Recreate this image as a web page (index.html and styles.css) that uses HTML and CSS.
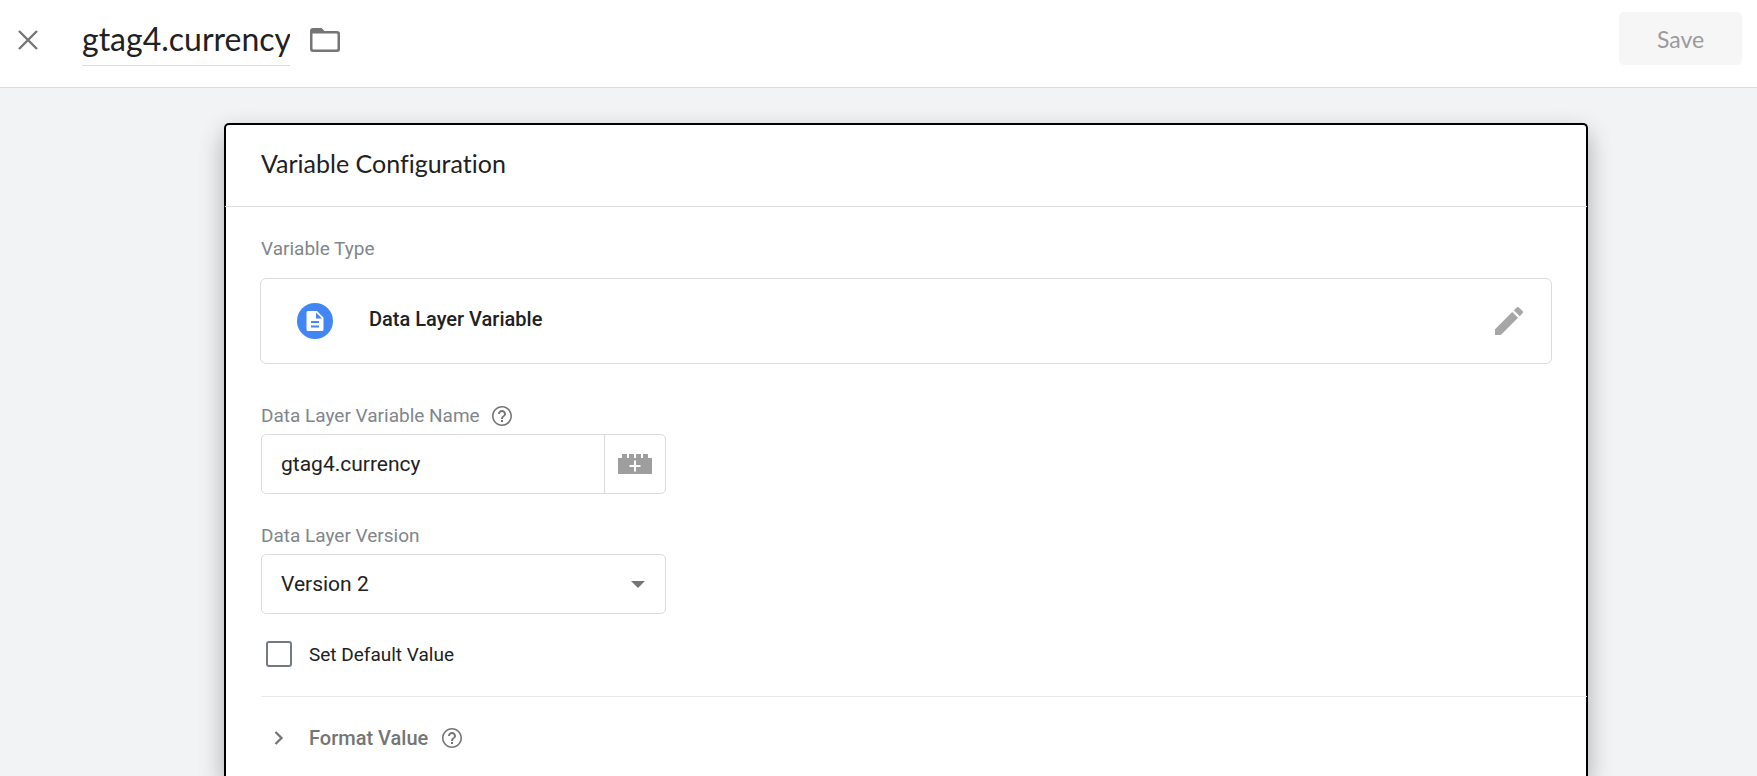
FILE: index.html
```html
<!DOCTYPE html>
<html lang="en">
<head>
    <meta charset="UTF-8">
    <meta name="viewport" content="width=device-width, initial-scale=1.0">
    <title>gtag4.currency | Variable</title>
    <link rel="stylesheet" href="styles.css">
</head>
<body>
    <header class="topbar">
        <button class="icon-button" type="button" aria-label="Close">
            <svg width="20" height="20" viewBox="0 0 20 20"><path d="M1 1L19 19M19 1L1 19" fill="none" stroke="#757575" stroke-width="2.4"/></svg>
        </button>
        <input class="title-input" type="text" value="gtag4.currency" aria-label="Variable name">
        <button class="icon-button" type="button" aria-label="Move to folder">
            <svg width="30" height="24" viewBox="0 0 30 24"><path d="M3 0H11.500L14.500 3H27Q30 3 30 6V21Q30 24 27 24H3Q0 24 0 21V3Q0 0 3 0ZM2.500 5.500V20.500Q2.500 21.500 3.500 21.500H26.500Q27.500 21.500 27.500 20.500V6.500Q27.500 5.500 26.500 5.500Z" fill="#757575" fill-rule="evenodd"/></svg>
        </button>
        <button class="save-button" type="button" disabled>Save</button>
    </header>

    <main class="card">
        <h2 class="card-title">Variable Configuration</h2>
        <div class="card-body">
            <div class="label">Variable Type</div>
            <div class="type-box">
                <svg width="36" height="36" viewBox="0 0 36 36">
                    <circle cx="18" cy="18" r="18" fill="#4285f4"/>
                    <path d="M11 8H20L26.500 14.500V26.500Q26.500 28 25 28H11Q9.500 28 9.500 26.500V9.500Q9.500 8 11 8ZM19 9.500V15.500H25Z" fill="#fff" fill-rule="evenodd"/>
                    <path d="M14 19H22M14 23.500H22" stroke="#4285f4" stroke-width="2"/>
                </svg>
                <span class="type-name">Data Layer Variable</span>
                <button class="icon-button" type="button" aria-label="Edit type">
                    <svg width="28" height="28" viewBox="3 3 18 18"><path d="M3 17.250V21h3.750L17.810 9.940l-3.750-3.750L3 17.250zM20.710 7.040c.39-.39.39-1.020 0-1.410l-2.340-2.340c-.39-.39-1.020-.39-1.410 0l-1.830 1.830 3.750 3.750 1.830-1.830z" fill="#a6a6a6"/></svg>
                </button>
            </div>

            <div class="label-row">
                <label class="label" for="variable-name">Data Layer Variable Name</label>
                <svg class="help" width="20" height="20" viewBox="2 2 20 20"><path d="M11 18h2v-2h-2v2zm1-16C6.480 2 2 6.480 2 12s4.480 10 10 10 10-4.480 10-10S17.520 2 12 2zm0 18.400c-4.600 0-8.400-3.800-8.400-8.400s3.800-8.400 8.400-8.400 8.400 3.800 8.400 8.400-3.800 8.400-8.400 8.400zm0-14.400c-2.210 0-4 1.790-4 4h2c0-1.100.9-2 2-2s2 .9 2 2c0 2-3 1.750-3 5h2c0-2.250 3-2.500 3-5 0-2.210-1.790-4-4-4z"/></svg>
            </div>
            <div class="field name-field">
                <input id="variable-name" type="text" value="gtag4.currency">
                <button type="button" aria-label="Insert variable">
                    <svg width="34" height="20" viewBox="0 0 34 20">
                        <path d="M0 4H4V0H9V4H11V0H16V4H18V0H23V4H25V0H30V4H34V20H0Z" fill="#9e9e9e"/>
                        <path d="M17 6.500V17.500M11.500 12H22.500" stroke="#fff" stroke-width="2"/>
                    </svg>
                </button>
            </div>

            <div class="label-row">
                <label class="label" for="version">Data Layer Version</label>
            </div>
            <div class="field version-field">
                <select id="version">
                    <option>Version 1</option>
                    <option selected>Version 2</option>
                </select>
            </div>

            <label class="checkbox-row">
                <input type="checkbox">
                Set Default Value
            </label>

            <div class="format-row">
                <button class="format-button" type="button" aria-expanded="false">
                    <svg width="10" height="14" viewBox="0 0 10 14"><path d="M1.500 1L7.500 7L1.500 13" fill="none" stroke="#757575" stroke-width="2.300"/></svg>
                    Format Value
                </button>
                <svg class="help" width="20" height="20" viewBox="2 2 20 20"><path d="M11 18h2v-2h-2v2zm1-16C6.480 2 2 6.480 2 12s4.480 10 10 10 10-4.480 10-10S17.520 2 12 2zm0 18.400c-4.600 0-8.400-3.800-8.400-8.400s3.800-8.400 8.400-8.400 8.400 3.800 8.400 8.400-3.800 8.400-8.400 8.400zm0-14.400c-2.210 0-4 1.790-4 4h2c0-1.100.9-2 2-2s2 .9 2 2c0 2-3 1.750-3 5h2c0-2.250 3-2.500 3-5 0-2.210-1.790-4-4-4z"/></svg>
            </div>
        </div>
    </main>
</body>
</html>
```

FILE: styles.css
```css
* {
    box-sizing: border-box;
}

body {
    margin: 0;
    min-height: 100vh;
    display: flex;
    flex-direction: column;
    background-color: #f1f3f4;
    color: #212121;
    font-family: Roboto, sans-serif;
    font-size: 19px;
    overflow: hidden;
}

svg {
    display: block;
    flex: none;
}

button,
input,
select {
    font: inherit;
    color: inherit;
}

.topbar {
    display: flex;
    align-items: flex-start;
    height: 88px;
    padding: 12px 15px 0 18px;
    background-color: #fff;
    border-bottom: 1px solid #dadce0;
}

.icon-button {
    display: flex;
    padding: 0;
    border: none;
    background: none;
    cursor: pointer;
}

.topbar .icon-button {
    height: 56px;
    align-items: center;
}

.title-input {
    width: 208px;
    height: 54px;
    margin: 0 20px 0 44px;
    padding: 0;
    border: none;
    border-bottom: 1px solid #dadce0;
    font-family: Lato, sans-serif;
    font-size: 32px;
}

.save-button {
    width: 123px;
    height: 53px;
    margin-left: auto;
    border: none;
    border-radius: 5px;
    background-color: #f6f6f6;
    color: #9a9a9d;
    font-family: Lato, sans-serif;
    font-size: 23px;
}

.card {
    flex: 1;
    margin: 35px 169px 0 224px;
    background-color: #fff;
    border: 2px solid #000;
    border-bottom: none;
    border-radius: 5px 5px 0 0;
    box-shadow: 0 10px 24px rgba(0, 0, 0, 0.3);
}

.card-title {
    height: 82px;
    margin: 0 -1px;
    padding: 0 36px;
    border-bottom: 1px solid #dedede;
    font-family: Lato, sans-serif;
    font-size: 25px;
    font-weight: 400;
    font-variant-ligatures: none;
    line-height: 76px;
}

.card-body {
    padding: 31px 34px 0 35px;
}

.label {
    color: #80868b;
    line-height: 22px;
}

.type-box {
    display: flex;
    align-items: center;
    height: 86px;
    margin: 18px 0 41px -1px;
    padding: 0 28px 0 36px;
    border: 1px solid #dadce0;
    border-radius: 6px;
}

.type-name {
    flex: 1;
    padding: 0 36px 4px;
    font-size: 20px;
    font-weight: 500;
}

.label-row {
    display: flex;
    align-items: center;
    gap: 12px;
}

.help {
    fill: #757575;
}

.field {
    display: flex;
    width: 405px;
    height: 60px;
    margin: 7px 0 31px;
    border: 1px solid #dadce0;
    border-radius: 5px;
    font-size: 21px;
}

.name-field input {
    flex: 1;
    min-width: 0;
    padding: 0 19px;
    border: none;
    background: none;
}

.name-field button {
    display: flex;
    align-items: center;
    justify-content: center;
    width: 61px;
    padding: 0;
    border: none;
    border-left: 1px solid #dadce0;
    background: none;
}

.version-field {
    position: relative;
    margin-bottom: 27px;
}

.version-field::after {
    content: "";
    position: absolute;
    top: 26px;
    right: 20px;
    border: 7px solid transparent;
    border-top-color: #757575;
    border-bottom: none;
    pointer-events: none;
}

.version-field select {
    appearance: none;
    width: 100%;
    padding: 0 19px;
    border: none;
    background: none;
}

.checkbox-row {
    display: flex;
    align-items: center;
    gap: 17px;
    padding-left: 5px;
}

.checkbox-row input {
    appearance: none;
    width: 26px;
    height: 26px;
    margin: 0;
    border: 2px solid #757a80;
    border-radius: 3px;
}

.format-row {
    display: flex;
    align-items: center;
    gap: 14px;
    margin: 29px -35px 0 0;
    padding-top: 29px;
    border-top: 1px solid #e8e8e8;
}

.format-button {
    display: flex;
    align-items: center;
    gap: 25px;
    padding: 0 0 0 13px;
    border: none;
    background: none;
    color: #757575;
    font-size: 20px;
    font-weight: 500;
}
```
